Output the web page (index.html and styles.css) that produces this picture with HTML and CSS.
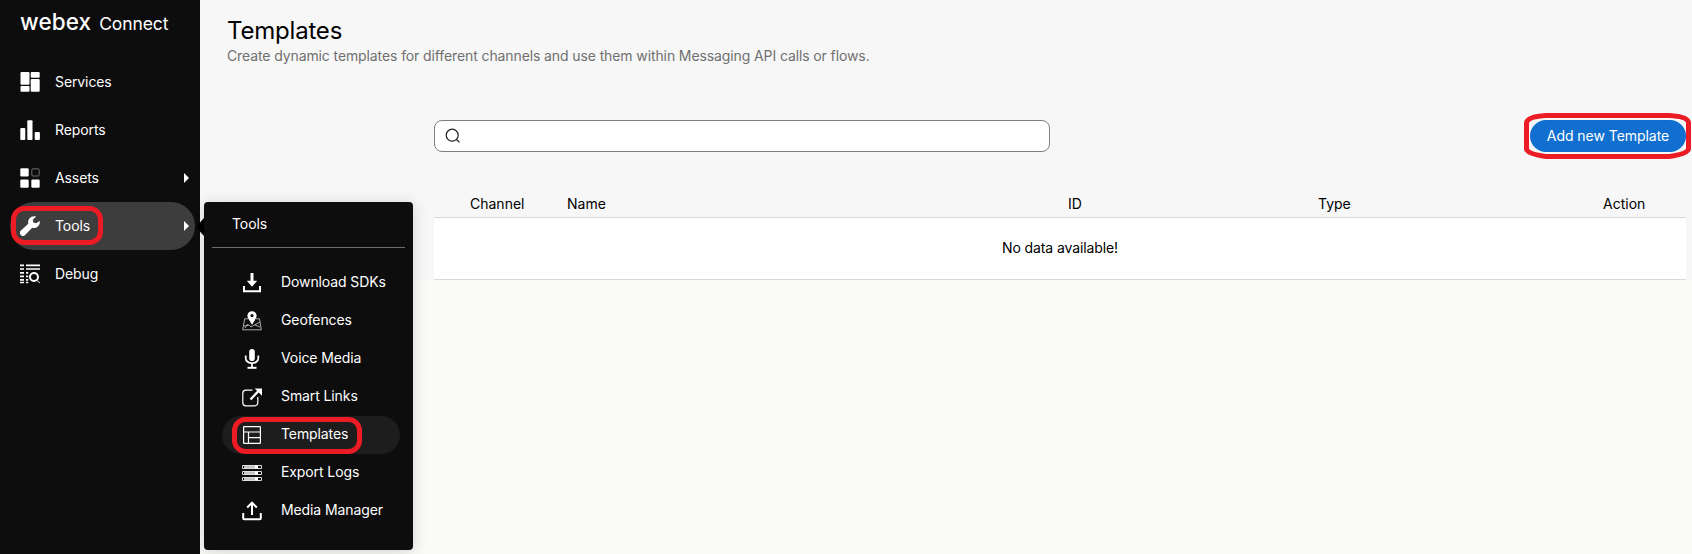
FILE: index.html
```html
<!DOCTYPE html>
<html lang="en">
<head>
<meta charset="utf-8">
<title>Templates</title>
<link rel="stylesheet" href="styles.css">
</head>
<body>
<div class="app">
  <aside class="sidebar">
    <div class="brand"><span class="brand-name">webex</span><span class="brand-product">Connect</span></div>
    <nav class="nav">
      <a class="nav-item"><svg class="icon" viewBox="0 0 20 20" fill="#fff"><rect x=".5" y="0" width="9" height="12.7" rx="1"/><rect x="10.7" y="0" width="9" height="5.7" rx="1"/><rect x=".5" y="14" width="9" height="5.7" rx="1"/><rect x="10.7" y="7" width="9" height="12.7" rx="1"/></svg><span>Services</span></a>
      <a class="nav-item"><svg class="icon" viewBox="0 0 20 20" fill="#fff"><rect x=".3" y="8" width="5" height="12" rx="1"/><rect x="7.3" y=".2" width="5.2" height="19.8" rx="1"/><rect x="14.7" y="12" width="5.2" height="8" rx="1"/></svg><span>Reports</span></a>
      <a class="nav-item"><svg class="icon" viewBox="0 0 20 20" fill="#fff"><rect x=".3" y=".3" width="8.4" height="8.2" rx="1.2"/><rect x=".3" y="11.5" width="8.4" height="8.2" rx="1.2"/><rect x="11.3" y="11.5" width="8.4" height="8.2" rx="1.2"/><rect x="11.8" y=".8" width="7.4" height="7.2" rx="1.2" fill="none" stroke="#777" stroke-width=".9"/></svg><span>Assets</span><i class="caret"></i></a>
      <a class="nav-item active"><svg class="icon" viewBox="0 0 20 20" fill="#fff"><path d="M14.2.2a6 6 0 0 0-5.900 7.500L.9 14.600A3 3 0 0 0 5.100 19l7.100-7.200a6 6 0 0 0 7.500-6.900l-3.600 2.300-2.800-.8-.5-2.700L16.200.6a6 6 0 0 0-2-.4z"/></svg><span>Tools</span><i class="caret"></i><svg class="mark mark-nav" viewBox="0 0 92 39"><rect x="2.500" y="2.500" width="87" height="34" rx="11"/></svg></a>
      <a class="nav-item"><svg class="icon" viewBox="0 0 20 20" fill="none" stroke="#fff"><path d="M0 1.300h4M6 1.300h14M0 5h4M6 5h14M0 8.800h4M0 12.300h4M0 15.800h4M0 18.500h4M6 8.800h2.200M6 12.300h2.200M6 15.800h2.200M6 18.500h2.200" stroke-width="1.700"/><circle cx="14" cy="13" r="4" stroke-width="2"/><path d="M17 16.300l3 3" stroke-width="1"/></svg><span>Debug</span></a>
    </nav>
  </aside>
  <main class="main">
    <header class="page-head">
      <h1 class="title">Templates</h1>
      <p class="subtitle">Create dynamic templates for different channels and use them within Messaging API calls or flows.</p>
    </header>
    <section class="content">
      <div class="toolbar">
        <div class="search"><svg class="search-icon" viewBox="0 0 16 16" fill="none" stroke="#222" stroke-width="1.200"><circle cx="7.200" cy="7.200" r="6"/><path d="M11.500 11.500l3 2.800"/></svg></div>
        <button class="add">Add new Template<svg class="mark mark-add" viewBox="0 0 167 46"><path d="M22 2.500H145Q164.500 3.500 164.500 10V36Q163.500 41 145 43.500H22Q3.500 41 2.500 36V10Q3.500 3.500 22 2.500z"/></svg></button>
      </div>
      <div class="table">
        <div class="thead"><span>Channel</span><span>Name</span><span>ID</span><span>Type</span><span>Action</span></div>
        <div class="empty">No data available!</div>
      </div>
    </section>
  </main>
  <div class="flyout">
    <div class="flyout-title">Tools</div>
    <div class="flyout-list">
      <a class="tool"><svg class="icon" viewBox="0 0 20 20" fill="none" stroke="#fff"><path d="M2 13v5.200h16V13" stroke-width="2"/><path d="M10 0v8" stroke-width="3"/><path d="M4.800 7.800h10.400L10 13.800z" fill="#fff" stroke="none"/></svg><span>Download SDKs</span></a>
      <a class="tool"><svg class="icon" viewBox="0 0 20 20" fill="none" stroke="#bbb"><path d="M6 7.800H2.700L.7 18.800h18.600L17.500 7.800H14M2 15l5-1 2 2 9-5M13 14l5 2M3 17l3-4" stroke-width=".9"/><path d="M10 .2a4.600 4.600 0 0 0-4.600 4.600c0 3 2.600 4.700 4.600 9.200 2-4.500 4.600-6.200 4.600-9.200A4.600 4.600 0 0 0 10 .2zm0 2.800a1.600 1.600 0 1 1 0 3.200 1.600 1.600 0 0 1 0-3.200z" fill="#fff" fill-rule="evenodd" stroke="none"/></svg><span>Geofences</span></a>
      <a class="tool"><svg class="icon" viewBox="0 0 20 20" fill="none" stroke="#fff"><rect x="7.200" y="0" width="5.600" height="12" rx="2.800" fill="#fff" stroke="none"/><path d="M3.700 6.500v2.700a6.300 5 0 0 0 12.600 0V6.500M10 14.200v4" stroke-width="1.700"/><path d="M5.500 18.800h9" stroke-width="2"/></svg><span>Voice Media</span></a>
      <a class="tool"><svg class="icon" viewBox="0 0 20 20" fill="none" stroke="#fff"><path d="M10.500 3.200H3.700A3 3 0 0 0 .8 6.200v9.600a3 3 0 0 0 3 3h9a3 3 0 0 0 3-3V10" stroke-width="1.200"/><path d="M8.500 12.500l8-8.500" stroke-width="2.300"/><path d="M12.700 1.500H20v7.200z" fill="#fff" stroke="none"/></svg><span>Smart Links</span></a>
      <a class="tool current"><svg class="icon" viewBox="0 0 20 20" fill="none" stroke="#fff" stroke-width="1.200"><rect x="1.600" y="1.600" width="16.800" height="16.800" rx=".5"/><path d="M1.600 7h16.800M6.500 7v11.400M6.500 12.600h11.900"/></svg><span>Templates</span><svg class="mark mark-tool" viewBox="0 0 130 37"><rect x="2.500" y="2.500" width="125" height="32" rx="11"/></svg></a>
      <a class="tool"><svg class="icon" viewBox="0 0 20 20" fill="none" stroke="#ddd"><path d="M.5 2.500h19v3H.5zM.5 8.500h19v3H.5zM.5 14.500h19v3H.5z"/><path d="M2 4h11M2 10h11M2 16h11" stroke="#fff" stroke-width="1.300"/><path d="M13 4h3M13 10h3M13 16h3" stroke="#fff" stroke-width="3"/></svg><span>Export Logs</span></a>
      <a class="tool"><svg class="icon" viewBox="0 0 20 20" fill="none" stroke="#fff" stroke-width="2"><path d="M1.200 12v5.200q0 1 1 1h15.600q1 0 1-1V12M10 14V2.200M5.200 6.500L10 1.700l4.800 4.800"/></svg><span>Media Manager</span></a>
    </div>
  </div>
</div>
</body>
</html>
```
FILE: styles.css
```css
* { box-sizing: border-box; }
body {
  margin: 0;
  font: 14px/20px Inter, "Liberation Sans", sans-serif;
  letter-spacing: -.1px;
  color: #000;
}
.app {
  position: relative;
  display: flex;
  width: 100%;
  height: 554px;
  overflow: hidden;
  background: linear-gradient(#f7f7f7 280px, #fafaf8 280px);
}
.sidebar {
  width: 200px;
  flex: none;
  background: #0d0d0d;
  color: #fff;
}
.brand {
  display: flex;
  align-items: baseline;
  gap: 8px;
  height: 58px;
  padding: 8px 0 0 20px;
  line-height: 28px;
}
.brand-name { font-size: 22.5px; font-weight: 500; letter-spacing: .1px; }
.brand-product { font-size: 17.5px; letter-spacing: -.1px; }
.nav { padding: 0 5px 0 10px; }
.nav-item {
  position: relative;
  display: flex;
  align-items: center;
  gap: 15px;
  height: 48px;
  padding: 0 6px 0 10px;
  border-radius: 24px;
}
.nav-item.active { background: #3d3d3d; }
.icon { width: 20px; height: 20px; flex: none; }
.caret {
  margin-left: auto;
  border-left: 5px solid #fff;
  border-top: 5px solid transparent;
  border-bottom: 5px solid transparent;
}
.mark {
  position: absolute;
  fill: none;
  stroke: #ed1c24;
  stroke-width: 5;
}
.mark-nav { left: 1px; top: 4px; width: 92px; height: 39px; }
.mark-add { left: -6px; top: -7px; width: 167px; height: 46px; }
.mark-tool { left: 10px; top: 1px; width: 130px; height: 37px; }
.main { flex: 1; padding-right: 6px; }
.page-head { height: 120px; padding: 15px 0 0 27px; }
.title { margin: 0; font-size: 24px; font-weight: 400; line-height: 32px; letter-spacing: -.2px; }
.subtitle { margin: -1px 0 0; color: #707070; letter-spacing: -.108px; }
.content { padding-left: 234px; }
.toolbar { display: flex; justify-content: space-between; }
.search {
  display: flex;
  align-items: center;
  width: 616px;
  height: 32px;
  padding-left: 10px;
  border: 1px solid #808080;
  border-radius: 8px;
  background: #fff;
}
.search-icon { width: 16px; height: 16px; }
.add {
  position: relative;
  width: 156px;
  height: 32px;
  padding: 0;
  border: 0;
  border-radius: 16px;
  background: #1170cf;
  color: #fff;
  font: inherit;
  letter-spacing: -.05px;
}
.table { margin-top: 40px; }
.thead {
  display: grid;
  grid-template-columns: 97px 501px 250px 285px 1fr;
  height: 26px;
  padding-left: 36px;
  border-bottom: 1px solid #d8d9da;
  line-height: 24px;
  letter-spacing: 0;
}
.empty {
  height: 62px;
  border-bottom: 1px solid #d8d9da;
  background: #fff;
  line-height: 60px;
  text-align: center;
}
.flyout {
  position: absolute;
  left: 204px;
  top: 202px;
  width: 209px;
  height: 348px;
  padding: 0 8px;
  border-radius: 4px;
  background: #0d0d0d;
  color: #fff;
  box-shadow: 0 2px 16px rgba(0, 0, 0, .16);
}
.flyout::before {
  content: "";
  position: absolute;
  left: -8px;
  top: 16px;
  border-right: 8px solid #000;
  border-top: 9px solid transparent;
  border-bottom: 9px solid transparent;
}
.flyout-title {
  height: 46px;
  padding-left: 20px;
  border-bottom: 1px solid #6d6d76;
  line-height: 44px;
}
.flyout-list { padding: 16px 5px 0 10px; }
.tool {
  position: relative;
  display: flex;
  align-items: center;
  gap: 19px;
  height: 38px;
  padding-left: 20px;
  border-radius: 19px;
}
.tool span { padding-bottom: 2px; }
.tool.current { background: #1d1d1d; }
```
